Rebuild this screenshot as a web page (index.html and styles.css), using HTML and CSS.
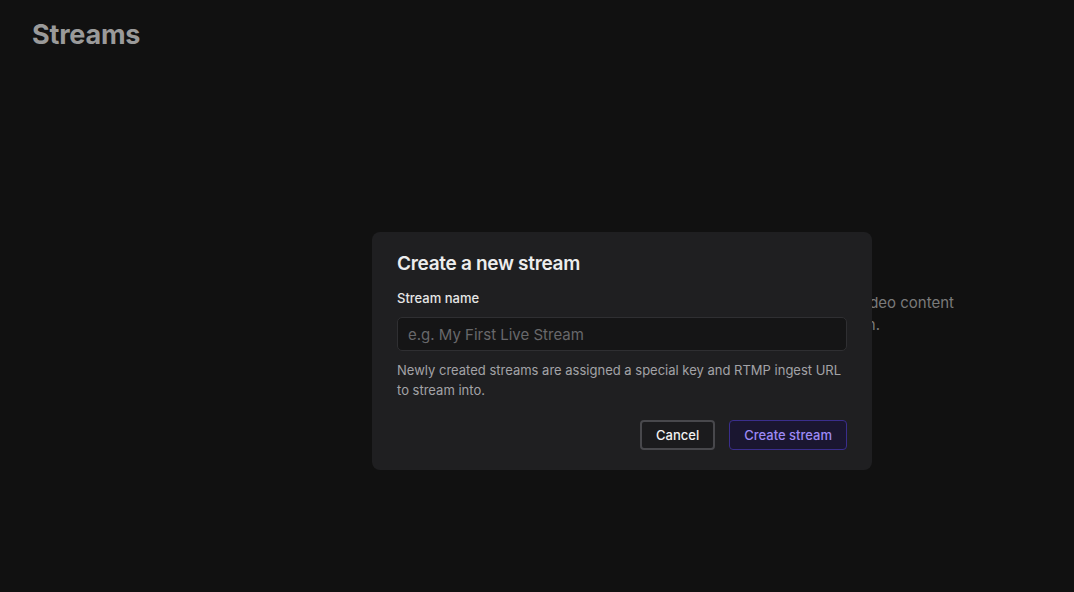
FILE: index.html
```html
<!DOCTYPE html>
<html lang="en">
<head>
<meta charset="utf-8">
<title>Streams</title>
<link rel="stylesheet" href="styles.css">
</head>
<body>
<div class="page">
  <h1 class="page-title">Streams</h1>
  <div class="empty">
    <p class="empty-text"><span class="line">Streams let you broadcast live video content</span><span class="line line-short">to viewers anywhere in realtime, on.</span></p>
  </div>
</div>
<div class="overlay">
  <div class="modal">
    <h2 class="modal-title">Create a new stream</h2>
    <label class="field-label" for="name">Stream name</label>
    <input class="field-input" id="name" type="text" placeholder="e.g. My First Live Stream">
    <p class="help">Newly created streams are assigned a special key and RTMP ingest URL to stream into.</p>
    <div class="actions">
      <button class="btn btn-cancel">Cancel</button>
      <button class="btn btn-primary">Create stream</button>
    </div>
  </div>
</div>
</body>
</html>
```
FILE: styles.css
```css
* { box-sizing: border-box; }
html, body { margin: 0; height: 100%; }
body {
  background: #111111;
  font-family: Inter, "Noto Sans", sans-serif;
  color: #e6e6e6;
  overflow: hidden;
}
.page { padding: 18px 32px; height: 100%; }
.page-title {
  margin: 0;
  font-size: 27px;
  font-weight: 700;
  color: #9a9a9a;
  line-height: 34px;
  letter-spacing: -0.2px;
}
.empty {
  display: flex;
  justify-content: flex-end;
  padding-top: 240px;
  padding-right: 88px;
}
.empty-text {
  margin: 0;
  font-size: 15px;
  line-height: 22px;
  color: #7a7a7a;
  text-align: right;
}
.line { display: block; }
.line-short { margin-right: 74px; }
.overlay {
  position: fixed;
  inset: 0;
  display: flex;
  align-items: flex-start;
  justify-content: center;
  padding-top: 232px;
  padding-left: 170px;
}
.modal {
  width: 500px;
  background: #1f1f21;
  border-radius: 8px;
  padding: 20px 25px 20px;
  display: flex;
  flex-direction: column;
}
.modal-title {
  margin: 0;
  font-size: 19px;
  line-height: 24px;
  font-weight: 600;
  color: #ededed;
  letter-spacing: -0.3px;
}
.field-label {
  margin-top: 13px;
  font-size: 13px;
  line-height: 18px;
  font-weight: 500;
  color: #e6e6e6;
}
.field-input {
  margin-top: 10px;
  height: 34px;
  width: 450px;
  background: #151516;
  border: 1px solid #2f2f32;
  border-radius: 5px;
  padding: 0 10px;
  font-family: inherit;
  font-size: 15px;
  color: #ddd;
  outline: none;
}
.field-input::placeholder { color: #68686b; }
.help {
  margin: 9px 0 0;
  font-size: 13px;
  line-height: 20px;
  color: #a3a3a7;
}
.actions {
  display: flex;
  justify-content: flex-end;
  gap: 14px;
  margin-top: 20px;
}
.btn {
  height: 30px;
  border-radius: 4px;
  font-family: inherit;
  font-size: 13px;
  font-weight: 500;
  padding: 0 14px;
  cursor: pointer;
}
.btn-cancel {
  background: #1b1b1d;
  border: 2px solid #48484c;
  color: #f2f2f2;
}
.btn-primary {
  background: #1a1630;
  border: 1px solid #3a2e8c;
  color: #9d8af6;
}
```
